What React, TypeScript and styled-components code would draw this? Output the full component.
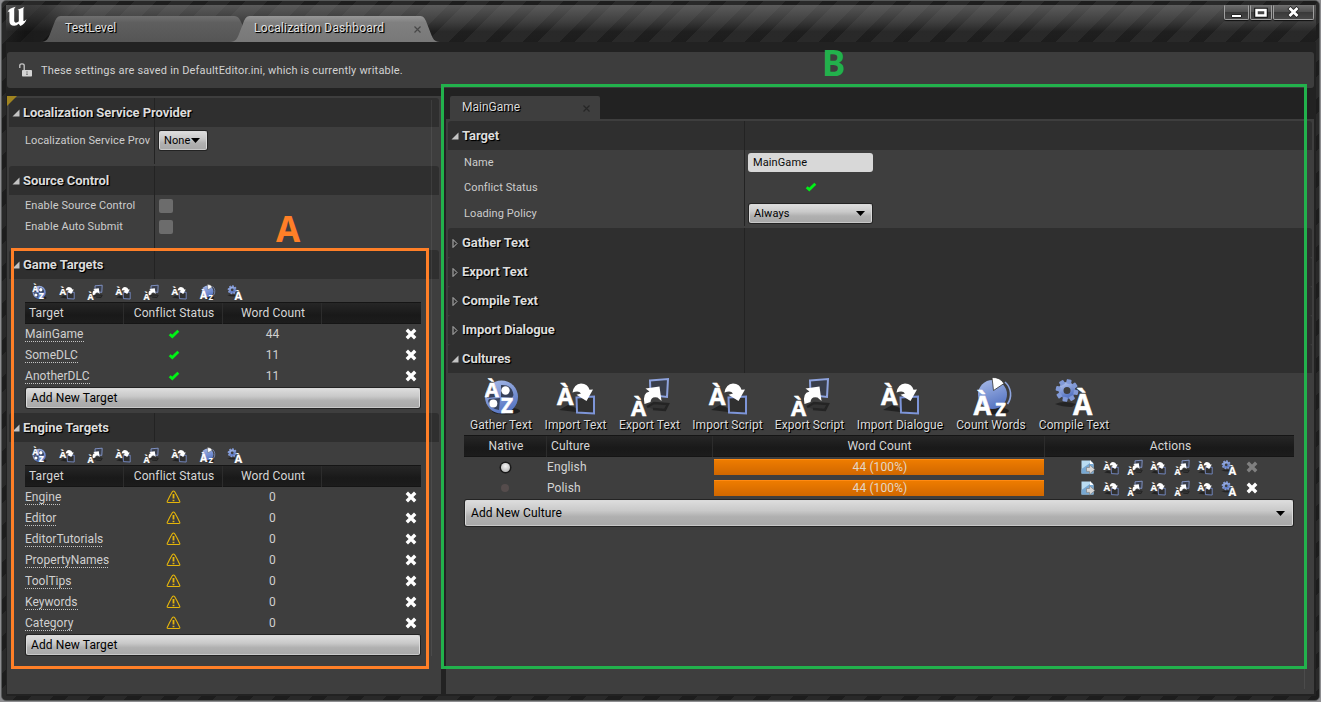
import React from "react";
import styled, { createGlobalStyle, css } from "styled-components";

const GlobalStyle = createGlobalStyle`
  * { box-sizing: border-box; }
  body { margin: 0; background: #8d8d90; overflow: hidden; font-family: Roboto, "Liberation Sans", sans-serif; }
`;

const shadow = css`text-shadow: 1px 1px 1px #000, 1px 1px 0 #000;`;
const divider = (x: number) => css`
  background-image: linear-gradient(#232323, #232323);
  background-size: 1px 100%;
  background-position: ${x}px 0;
  background-repeat: no-repeat;
`;

/* ---------- window frame ---------- */

const Window = styled.div`
  position: relative;
  display: flex;
  flex-direction: column;
  width: 1319px;
  height: 701px;
  margin-left: 1px;
  padding: 4px 3px 4px 4px;
  border: 1px solid #565858;
  border-radius: 5px;
  background: repeating-linear-gradient(135deg, #292929 0 4.95px, #1d1d1d 4.95px 15.56px, #292929 15.56px 26.16px);
`;

const TitleBar = styled.header`
  display: flex;
  flex: none;
  height: 37px;
  padding-left: 1px;
  background:
    linear-gradient(90deg, transparent 0, rgba(0, 0, 0, 0.35) 20px, rgba(0, 0, 0, 0.3) 40px, transparent 75px),
    linear-gradient(rgba(125, 125, 125, 0.6), rgba(110, 110, 110, 0.32) 45%, rgba(40, 40, 40, 0.15) 72%, transparent);
`;

const Logo = styled.svg`
  width: 20px;
  height: 21px;
  margin-top: 1px;
  margin-right: 14px;
`;

const TabRow = styled.div`
  display: flex;
  flex: 1;
  align-items: flex-end;
`;

const TopTab = styled.div<{ $active?: boolean }>`
  display: flex;
  align-items: center;
  justify-content: space-between;
  height: 26px;
  width: ${(p) => (p.$active ? 210 : 204)}px;
  margin-left: ${(p) => (p.$active ? -15 : 0)}px;
  padding: 0 19px 2px 24px;
  font-size: 12px;
  letter-spacing: ${(p) => (p.$active ? 0.2 : 0.05)}px;
  color: #e2e2e2;
  ${shadow}
  background: ${(p) => (p.$active ? "linear-gradient(#979797, #808080 25%, #787878)" : "linear-gradient(#707070, #5f5f5f 25%, #555)")};
  clip-path: ${(p) =>
    p.$active
      ? 'path("M0 26 C6 25.500 7 23 9 18 L14 5 C16 1 17 0 21 0 H189 C193 0 194 1 196 5 L201 18 C203 23 204 25.500 210 26 Z")'
      : 'path("M0 26 C6 25.500 7 23 9 18 L14 5 C16 1 17 0 21 0 H193 C198 0 199 4 201 8 L204 26 Z")'};
`;

const TabClose = styled.svg`
  width: 7px;
  height: 7px;
  margin-top: 2px;
  stroke: #484848;
  stroke-width: 1.2;
`;

const WindowButtons = styled.div`
  display: flex;
  gap: 1px;
  padding-right: 2px;
`;

const WindowButton = styled.button<{ $w: number }>`
  display: flex;
  align-items: center;
  justify-content: center;
  width: ${(p) => p.$w}px;
  height: 15px;
  padding: 0 1px 1px 0;
  border: 1px solid #a0a0a0;
  border-top-color: #707070;
  border-radius: 0 0 2px 2px;
  background: linear-gradient(#6a6a6a, #505050 45%, #3a3a3a 50%, #474747);
  box-shadow: 0 1px 1px #111;
`;

const Body = styled.div`
  display: flex;
  flex: 1;
  flex-direction: column;
  padding: 10px 2px 2px 2px;
  background: #222;
`;

const Notice = styled.div`
  display: flex;
  flex: none;
  align-items: center;
  height: 36px;
  margin-left: -1px;
  padding: 0 0 0 12px;
  gap: 8px;
  border-radius: 3px;
  background: #3d3d3d;
  font-size: 11px;
  letter-spacing: 0.185px;
  color: #d2d2d2;
`;

const Columns = styled.main`
  display: flex;
  flex: 1;
  gap: 5px;
  margin: 8px 0 0 -1px;
`;

/* ---------- panels ---------- */

const Panel = styled.section`
  position: relative;
  display: flex;
  flex: 1;
  flex-direction: column;
  padding: 2px;
  background: #3e3e3e;
`;

const LeftPanel = styled(Panel)`
  flex: none;
  width: 434px;
`;

const ScrollTrack = styled.i<{ $right: number; $bottom: number }>`
  position: absolute;
  top: 4px;
  right: ${(p) => p.$right}px;
  bottom: ${(p) => p.$bottom}px;
  width: 1px;
  background: rgba(255, 255, 255, 0.07);
`;

const Corner = styled.i`
  position: absolute;
  top: 0;
  left: 0;
  border: 5px solid;
  border-color: #a08420 transparent transparent #a08420;
`;

const RightSide = styled.div`
  display: flex;
  flex: 1;
  flex-direction: column;
`;

const DocTab = styled.div`
  display: flex;
  flex: none;
  align-items: center;
  justify-content: space-between;
  width: 150px;
  height: 23px;
  margin-left: 4px;
  padding: 0 10px 1px 12px;
  border-radius: 2px 2px 0 0;
  background: #3e3e3e;
  font-size: 12px;
  color: #dadada;
  ${shadow}
  ${TabClose} { stroke: #262626; }
`;

const Section = styled.div<{ $gap?: number }>`
  flex: none;
  margin-bottom: ${(p) => p.$gap ?? 0}px;
`;

const SectionTitle = styled.h2<{ $x: number }>`
  display: flex;
  align-items: center;
  height: 29px;
  margin: 0;
  padding-left: 2.5px;
  gap: 3.5px;
  border-radius: 3px 3px 0 0;
  background-color: #2f2f2f;
  ${(p) => divider(p.$x)}
  font-size: 13px;
  font-weight: 700;
  letter-spacing: -0.07px;
  color: #dcdcdc;
  ${shadow}
`;

const Arrow = styled.svg`
  width: 8px;
  height: 10px;
  margin-top: 1px;
`;

const Rows = styled.div<{ $x: number; $bottom?: number }>`
  ${(p) => divider(p.$x)}
  padding-bottom: ${(p) => p.$bottom ?? 0}px;
`;

const Row = styled.div<{ $h: number; $label: number }>`
  display: grid;
  grid-template-columns: ${(p) => p.$label}px 1fr;
  align-items: center;
  height: ${(p) => p.$h}px;
  padding-left: 16px;
  font-size: 11px;
  letter-spacing: 0.1px;
  color: #cdcdcd;
`;

const Label = styled.span`
  white-space: nowrap;
`;

const Checkbox = styled.span`
  width: 14px;
  height: 14px;
  border-radius: 2px;
  background: #6c6c6c;
`;

const button = css`
  display: flex;
  align-items: center;
  justify-content: space-between;
  border: 1px solid #dadada;
  border-bottom-color: #c8c8c8;
  border-radius: 2px;
  background: linear-gradient(#dcdcdc, #c9c9c9 40%, #b0b0b0 65%, #a9a9a9);
  box-shadow: 0 0 0 1px #232323;
  color: #000;
  font-family: inherit;
  text-align: left;
`;

const Select = styled.button<{ $w: number }>`
  ${button}
  width: ${(p) => p.$w}px;
  height: 19px;
  padding: 0 6px 0 4px;
  font-size: 11px;
  letter-spacing: 0.1px;
`;

const AddButton = styled.button<{ $h: number; $pad?: number }>`
  ${button}
  width: calc(100% - 2px);
  height: ${(p) => p.$h}px;
  margin: 1px;
  padding: 0 7px 0 ${(p) => p.$pad ?? 4}px;
  font-size: 12px;
  letter-spacing: 0.1px;
`;

const Field = styled.div`
  width: 125px;
  height: 19px;
  margin-left: -1px;
  padding: 0 5px;
  border-radius: 3px;
  background: #d8d8d8;
  color: #0a0a0a;
  font-size: 11px;
  line-height: 19px;
`;

const StatusCell = styled.span`
  display: flex;
  justify-content: center;
  width: 124px;
  padding-bottom: 2px;
`;

/* ---------- target tables ---------- */

const SmallTools = styled.div`
  display: flex;
  align-items: center;
  height: 23px;
  padding: 2px 0 0 22px;
  gap: 12px;
`;

const TargetTable = styled.div`
  width: 396px;
  margin-left: 16px;
  font-size: 12px;
  letter-spacing: 0.05px;
  color: #d0d0d0;
`;

const headBar = css`
  display: grid;
  height: 22px;
  border: 1px solid #151515;
  border-width: 1px 0;
  background: linear-gradient(#262626, #191919 60%, #1c1c1c);
  line-height: 21px;
  letter-spacing: 0.12px;
  text-align: center;
  color: #d6d6d6;
`;

const TargetHead = styled.div`
  ${headBar}
  grid-template-columns: 99px 99px 99px 1fr;
`;

const HeadCell = styled.span<{ $left?: number }>`
  padding-left: 2px;
  border-right: 1px solid #2c2c2c;
  ${(p) => p.$left !== undefined && css`text-align: left; padding-left: ${p.$left}px;`}
  &:last-child { border-right: 0; }
`;

const TargetRow = styled.div`
  display: grid;
  grid-template-columns: 99px 99px 99px 1fr;
  align-items: center;
  justify-items: center;
  height: 21px;
  padding: 0 4px 2px 0;
`;

const TargetLink = styled.a`
  justify-self: start;
  height: 15px;
  line-height: 14px;
  margin-top: 1px;
  background: repeating-linear-gradient(90deg, #c4c4c4 0 1px, transparent 1px 2px) 0 100% / 100% 1px no-repeat;
`;

const Remove = styled.svg<{ $dim?: boolean }>`
  width: 12px;
  height: 12px;
  justify-self: end;
  stroke: ${(p) => (p.$dim ? "#808080" : "#fff")};
  stroke-width: 3.4;
`;

/* ---------- cultures ---------- */

const BigTools = styled.div`
  display: flex;
  height: 62px;
  padding: 3px 0 0 22px;
  gap: 13px;
`;

const BigTool = styled.div<{ $w: number }>`
  display: flex;
  flex-direction: column;
  align-items: center;
  gap: 1px;
  width: ${(p) => p.$w}px;
  font-size: 12px;
  line-height: 16px;
  letter-spacing: 0.06px;
  white-space: nowrap;
  color: #dcdcdc;
  ${shadow}
`;

const CultureTable = styled.div`
  width: 830px;
  margin-left: 16px;
  font-size: 12px;
  letter-spacing: 0.12px;
  color: #d4d4d4;
`;

const CultureHead = styled.div`
  ${headBar}
  grid-template-columns: 83px 166px 332px 1fr;
`;

const CultureRow = styled.div`
  display: grid;
  grid-template-columns: 82px 167px 331px 1fr;
  align-items: center;
  height: 21px;
  padding-bottom: 1px;
`;

const CultureName = styled.span`
  padding: 0 0 1px 1px;
`;

const Radio = styled.span<{ $on: boolean }>`
  justify-self: center;
  width: ${(p) => (p.$on ? 9 : 8)}px;
  height: ${(p) => (p.$on ? 9 : 8)}px;
  border-radius: 50%;
  background: ${(p) => (p.$on ? "radial-gradient(circle at 50% 35%, #f4f4f4, #a8a8a8)" : "#554c4c")};
  box-shadow: ${(p) => (p.$on ? "0 0 0 1.5px #1a1a1a" : "none")};
`;

const Bar = styled.div`
  height: 16px;
  margin-left: 1px;
  padding-left: 2px;
  border-top: 1px solid #ff8a12;
  background: linear-gradient(#ee7c00, #d06700);
  line-height: 15px;
  text-align: center;
  color: #e4d6c6;
`;

const Actions = styled.div`
  display: flex;
  align-items: center;
  padding: 0 0 1px 35.5px;
  gap: 7.6px;
  ${Remove} { margin-left: 1.5px; }
`;

/* ---------- call-outs ---------- */

const Outline = styled.div<{ $c: string; $x: number; $y: number; $w: number; $h: number }>`
  position: absolute;
  left: ${(p) => p.$x - 2}px;
  top: ${(p) => p.$y - 1}px;
  width: ${(p) => p.$w}px;
  height: ${(p) => p.$h}px;
  border: 3px solid ${(p) => p.$c};
`;

const Mark = styled.span<{ $c: string; $x: number; $y: number }>`
  position: absolute;
  left: ${(p) => p.$x - 2}px;
  top: ${(p) => p.$y - 1}px;
  font: 700 35px/34px "Noto Sans", "Open Sans", sans-serif;
  color: ${(p) => p.$c};
`;

/* ---------- icons ---------- */

const IconText = styled.text`
  font-family: "Open Sans", sans-serif;
  font-weight: 700;
  letter-spacing: 0;
  fill: #fff;
  stroke: #fff;
  stroke-width: 0.5px;
  text-shadow: none;
`;

const Letter = ({ x, y, s, c = "À" }: { x: number; y: number; s: number; c?: string }) => (
  <IconText x={x} y={y} fontSize={s}>
    {c}
  </IconText>
);

const gearTeeth = [0, 45, 90, 135, 180, 225, 270, 315];

type Kind = "gather" | "import" | "export" | "count" | "compile";

const IconBox = styled.svg`
  flex: none;
  overflow: visible;
`;

const ToolIcon = ({ kind, size }: { kind: Kind; size: number }) => (
  <IconBox width={size} height={size} viewBox="0 0 40 40" fill="none">
    <defs>
      <linearGradient id="blue" x1="0" y1="0" x2="0.4" y2="1">
        <stop offset="0" stopColor="#a9bbe8" />
        <stop offset="1" stopColor="#5a78c4" />
      </linearGradient>
    </defs>
    {kind === "gather" && (
      <>
        <ellipse cx="25" cy="35" rx="14" ry="3.500" fill="#1f1f1f" />
        <circle cx="20.500" cy="21" r="16.500" fill="url(#blue)" />
        <path d="M5.500 14A16 16 0 0 1 12 7L15 12 14.500 21 6 22ZM20 9Q31 8 32.500 19L31 22 20 21Z" fill="#2b3345" opacity="0.85" />
        <path d="M8 23L19 22 18 34Q9 33 7 25Z" fill="#2b3345" opacity="0.8" />
        <Letter x={4} y={20.500} s={20} />
        <circle cx="24.500" cy="14.500" r="4.200" fill="#fff" />
        <circle cx="12.300" cy="27.500" r="4" fill="#fff" />
        <Letter x={20} y={37} s={21} c="Z" />
      </>
    )}
    {kind === "import" && (
      <>
        <path d="M3 34L12 29 20 32 20 36Z" fill="#222" />
        <path d="M20.500 21.500L38 20.500 38 37.500 21 36.500Z" fill="#303030" stroke="#7d95d8" strokeWidth="2" />
        <Letter x={1} y={28.500} s={24} />
        <path d="M16.500 16.500Q18 8 25 7.600Q32 8 33.500 13.800L37 13.500 30.500 25 20.500 18.800 25 17.600Q23 14 16.500 16.500Z" fill="#fff" />
      </>
    )}
    {kind === "export" && (
      <>
        <path d="M17 31L24 27 38 28 35 34 23 33" stroke="#242424" strokeWidth="2.500" fill="#333" />
        <path d="M20 4.500L38 3 37 21 20.500 19Z" fill="#3a3f4c" stroke="#8ea3de" strokeWidth="2" />
        <path d="M14.500 28Q12 17 19.500 15.500L15.500 12.500 29.500 10.500 31.500 25 27.500 21.500Q21 20 20.500 26Z" fill="#fff" />
        <Letter x={1} y={39.500} s={22} />
      </>
    )}
    {kind === "count" && (
      <>
        <ellipse cx="26" cy="35" rx="12" ry="3.500" fill="#1f1f1f" />
        <path d="M34 6A16.500 16.500 0 0 1 36.500 28" stroke="#8fa6e0" strokeWidth="1.600" />
        <circle cx="21.500" cy="18.500" r="14.500" fill="url(#blue)" />
        <path d="M22.500 14.500L21 1.500Q29 1 33 7.500Z" fill="#fff" stroke="#333" strokeWidth="0.800" />
        <Letter x={2.500} y={38.500} s={26} />
        <Letter x={24.500} y={39.500} s={18} c="Z" />
      </>
    )}
    {kind === "compile" && (
      <>
        <path d="M1 28Q10 24 22 28L18 31Q8 31 1 28Z" fill="#242424" />
        <circle cx="13" cy="14.500" r="6" stroke="url(#blue)" strokeWidth="5" />
        {gearTeeth.map((a) => (
          <rect key={a} x="10.500" y="3.200" width="5" height="4.500" rx="1" fill="#8199d6" transform={`rotate(${a + 12} 13 14.5)`} />
        ))}
        <Letter x={19} y={39} s={28} />
      </>
    )}
  </IconBox>
);

const Page = () => (
  <svg width="16" height="16" viewBox="0 0 16 16">
    <path d="M1.500 1.500H10L13.500 5V14.500H1.500Z" fill="#b9dcf2" />
    <path d="M1.500 10L12 2.500 13.500 5V14.500H1.500Z" fill="#78a8d2" />
    <path d="M10 1L13.500 5H10Z" fill="#fff" />
    <path d="M6.500 8.500H9.500V5.800L14.800 10.500 9.500 15V12.400H6.500Z" fill="#d6d6d6" stroke="#777" strokeWidth="0.600" />
  </svg>
);

const Check = () => (
  <svg width="12" height="10" viewBox="0 0 12 10">
    <path d="M1.700 5.200L4.300 7.600 10.300 1.700" fill="none" stroke="#00f216" strokeWidth="2.800" />
  </svg>
);

const Warning = () => (
  <svg width="15" height="14" viewBox="0 0 15 14" fill="none" stroke="#e5b50a">
    <path d="M6.300 1.800Q7.500 0.300 8.700 1.800Q11 5.500 13.800 11.500Q14 12.500 13 12.500H2Q1 12.500 1.200 11.500Q4 5.500 6.300 1.800Z" strokeWidth="1.100" />
    <path d="M7.500 4V8.500M7.500 9.700V11.200" strokeWidth="1.800" />
  </svg>
);

const Caret = () => (
  <svg width="9" height="5" viewBox="0 0 9 5">
    <path d="M0 0H9L4.500 5Z" fill="#000" />
  </svg>
);

const Cross = ({ dim }: { dim?: boolean }) => (
  <Remove viewBox="0 0 12 12" $dim={dim}>
    <path d="M1.800 1.800L10.200 10.200M10.200 1.800L1.800 10.200" />
  </Remove>
);

const Close = () => (
  <TabClose viewBox="0 0 7 7">
    <path d="M0.500 0.500L6.500 6.500M6.500 0.500L0.500 6.500" />
  </TabClose>
);

const Title = ({ children, x, closed }: { children: string; x: number; closed?: boolean }) => (
  <SectionTitle $x={x}>
    <Arrow viewBox="0 0 8 10">
      {closed ? <path d="M2 1.500V9.500L6 5.500Z" fill="none" stroke="#b8b8b8" /> : <path d="M7.500 1.500V8.500H0.500Z" fill="#c4c4c4" />}
    </Arrow>
    {children}
  </SectionTitle>
);

/* ---------- data ---------- */

const kinds: Kind[] = ["gather", "import", "export", "import", "export", "import", "count", "compile"];
const rowKinds: Kind[] = ["import", "export", "import", "export", "import", "compile"];
const toolLabels: [string, number][] = [
  ["Gather Text", 62],
  ["Import Text", 61],
  ["Export Text", 61],
  ["Import Script", 69],
  ["Export Script", 69],
  ["Import Dialogue", 86],
  ["Count Words", 70],
  ["Compile Text", 70],
];
const gameTargets: [string, number][] = [["MainGame", 44], ["SomeDLC", 11], ["AnotherDLC", 11]];
const engineTargets: [string, number][] = ["Engine", "Editor", "EditorTutorials", "PropertyNames", "ToolTips", "Keywords", "Category"].map((n) => [n, 0]);

const Targets = ({ title, items, ok }: { title: string; items: [string, number][]; ok?: boolean }) => (
  <Section $gap={ok ? 4 : 0}>
    <Title x={145}>{title}</Title>
    <SmallTools>
      {kinds.map((k, i) => <ToolIcon key={i} kind={k} size={16} />)}
    </SmallTools>
    <TargetTable>
      <TargetHead>
        <HeadCell $left={4}>Target</HeadCell>
        <HeadCell>Conflict Status</HeadCell>
        <HeadCell>Word Count</HeadCell>
        <HeadCell />
      </TargetHead>
      {items.map(([name, count]) => (
        <TargetRow key={name}>
          <TargetLink>{name}</TargetLink>
          {ok ? <Check /> : <Warning />}
          <span>{count}</span>
          <Cross />
        </TargetRow>
      ))}
      <AddButton $h={20}>Add New Target</AddButton>
    </TargetTable>
  </Section>
);

export default function App() {
  return (
    <>
      <GlobalStyle />
      <Window>
        <TitleBar>
          <Logo viewBox="0 0 20 21">
            <path
              d="M0.500 6.500C1.500 3.500 4 1.800 8.800 0.800C7.600 1.800 7.200 2.600 7.200 4V14.500C7.200 16 8.300 17 9.600 16.600C10.600 16.300 11.300 15.800 11.800 15.200V5.200C11.800 4.200 11.300 3.800 10.300 3.800C12.500 3.200 15 2.300 17.500 0.800C16.600 1.800 16.400 2.800 16.400 4V14.200C16.400 15.400 17 15.600 19.500 13.200C18.500 16.500 16.500 18.500 13.500 20L11.600 17.800C10.500 19 9 19.800 7.200 19.800C4 19.800 2.400 17.800 2.400 15V6.500C2.400 5.200 1.800 5.200 0.500 6.500Z"
              fill="#fff"
            />
          </Logo>
          <TabRow>
            <TopTab>TestLevel</TopTab>
            <TopTab $active>
              Localization Dashboard
              <Close />
            </TopTab>
          </TabRow>
          <WindowButtons>
            <WindowButton $w={25}>
              <svg width="11" height="11"><path d="M0.500 7.500H10.500V10.500H0.500Z" fill="#fff" stroke="#222" /></svg>
            </WindowButton>
            <WindowButton $w={22}>
              <svg width="14" height="11"><path d="M2.500 3H11.500V8.500H2.500Z" fill="#333" stroke="#111" strokeWidth="4.500" /><path d="M2.500 3H11.500V8.500H2.500Z" fill="#444" stroke="#fff" strokeWidth="2.500" /></svg>
            </WindowButton>
            <WindowButton $w={41}>
              <svg width="13" height="12"><path d="M2 1.500L11 10.500M11 1.500L2 10.500" stroke="#222" strokeWidth="4.500" /><path d="M2.500 2L10.500 10M10.500 2L2.500 10" stroke="#fff" strokeWidth="2.800" /></svg>
            </WindowButton>
          </WindowButtons>
        </TitleBar>

        <Body>
          <Notice>
            <svg width="14" height="14" viewBox="0 0 14 14">
              <path d="M0.800 5V2.500Q0.800 0.800 3 0.800T5.200 2.500V7" fill="none" stroke="#c8c8c8" strokeWidth="1.300" />
              <rect x="3" y="7" width="10" height="6.500" rx="0.800" fill="#d4d4d4" />
              <path d="M8 8.500V9.500M8 10.500V12" stroke="#555" strokeWidth="1.200" />
            </svg>
            These settings are saved in DefaultEditor.ini, which is currently writable.
          </Notice>

          <Columns>
            <LeftPanel>
              <Corner />
              <Section $gap={2}>
                <Title x={145}>Localization Service Provider</Title>
                <Rows $x={145} $bottom={10}>
                  <Row $h={27} $label={134}>
                    <Label>Localization Service Prov</Label>
                    <Select $w={48}>None<Caret /></Select>
                  </Row>
                </Rows>
              </Section>
              <Section $gap={2}>
                <Title x={145}>Source Control</Title>
                <Rows $x={145} $bottom={11}>
                  <Row $h={21} $label={134}><Label>Enable Source Control</Label><Checkbox /></Row>
                  <Row $h={21} $label={134}><Label>Enable Auto Submit</Label><Checkbox /></Row>
                </Rows>
              </Section>
              <Targets title="Game Targets" items={gameTargets} ok />
              <Targets title="Engine Targets" items={engineTargets} />
              <ScrollTrack $right={9} $bottom={38} />
            </LeftPanel>

            <RightSide>
              <DocTab>MainGame<Close /></DocTab>
              <Panel>
                <Section $gap={2}>
                  <Title x={296}>Target</Title>
                  <Rows $x={296}>
                    <Row $h={25} $label={285}><Label>Name</Label><Field>MainGame</Field></Row>
                    <Row $h={25} $label={285}><Label>Conflict Status</Label><StatusCell><Check /></StatusCell></Row>
                    <Row $h={26} $label={285}><Label>Loading Policy</Label><Select $w={123}>Always<Caret /></Select></Row>
                  </Rows>
                </Section>
                {["Gather Text", "Export Text", "Compile Text", "Import Dialogue"].map((t) => (
                  <Title key={t} x={296} closed>{t}</Title>
                ))}
                <Section>
                  <Title x={296}>Cultures</Title>
                  <BigTools>
                    {toolLabels.map(([label, w], i) => (
                      <BigTool key={label} $w={w}>
                        <ToolIcon kind={kinds[i]} size={40} />
                        {label}
                      </BigTool>
                    ))}
                  </BigTools>
                  <CultureTable>
                    <CultureHead>
                      <HeadCell>Native</HeadCell>
                      <HeadCell $left={4}>Culture</HeadCell>
                      <HeadCell>Word Count</HeadCell>
                      <HeadCell>Actions</HeadCell>
                    </CultureHead>
                    {["English", "Polish"].map((name, i) => (
                      <CultureRow key={name}>
                        <Radio $on={i === 0} />
                        <CultureName>{name}</CultureName>
                        <Bar>44 (100%)</Bar>
                        <Actions>
                          <Page />
                          {rowKinds.map((k, j) => <ToolIcon key={j} kind={k} size={16} />)}
                          <Cross dim={i === 0} />
                        </Actions>
                      </CultureRow>
                    ))}
                    <AddButton $h={26} $pad={5}>Add New Culture<Caret /></AddButton>
                  </CultureTable>
                </Section>
                <ScrollTrack $right={9} $bottom={5} />
              </Panel>
            </RightSide>
          </Columns>
        </Body>

        <Outline $c="#ff7f27" $x={11} $y={248} $w={418} $h={421} />
        <Mark $c="#ff7f27" $x={276} $y={212}>A</Mark>
        <Outline $c="#22b14c" $x={441} $y={84} $w={866} $h={585} />
        <Mark $c="#22b14c" $x={822} $y={46}>B</Mark>
      </Window>
    </>
  );
}
